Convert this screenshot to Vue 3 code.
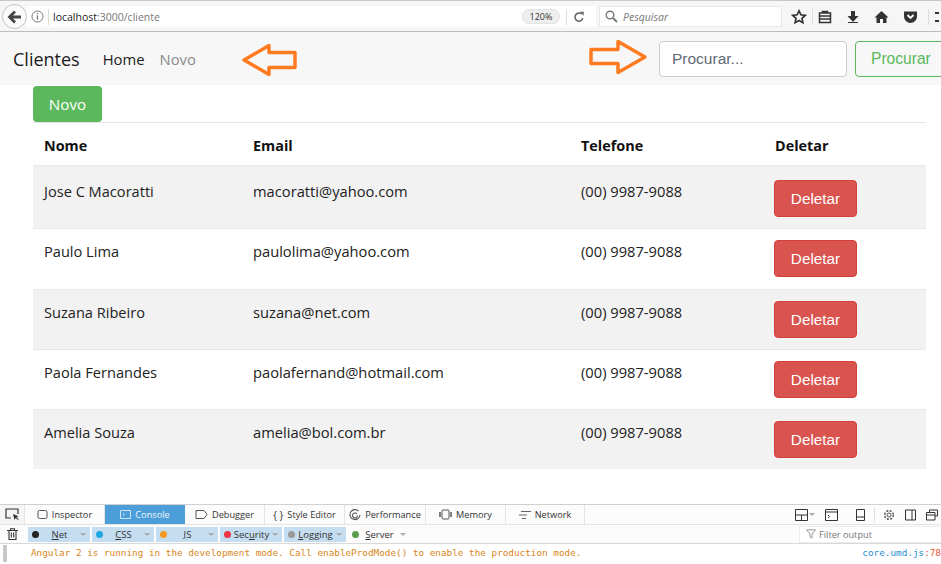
<script setup>
const rows = [
  { nome: 'Jose C Macoratti', email: 'macoratti@yahoo.com' },
  { nome: 'Paulo Lima', email: 'paulolima@yahoo.com' },
  { nome: 'Suzana Ribeiro', email: 'suzana@net.com' },
  { nome: 'Paola Fernandes', email: 'paolafernand@hotmail.com' },
  { nome: 'Amelia Souza', email: 'amelia@bol.com.br' },
]
const filters = [
  { pre: '', key: 'N', post: 'et', c: '#222' },
  { pre: '', key: 'C', post: 'SS', c: '#1fa8e0' },
  { pre: '', key: 'J', post: 'S', c: '#f59a23' },
  { pre: 'Sec', key: 'u', post: 'rity', c: '#ee3344' },
  { pre: '', key: 'L', post: 'ogging', c: '#999' },
]
</script>

<template>
  <div class="page">
    <header class="chrome">
      <div class="back">
        <svg width="16" height="16" viewBox="0 0 16 16"><path d="M8 2.500 2.500 8 8 13.500M3 8h11" fill="none" stroke="#444" stroke-width="2.800"/></svg>
      </div>
      <div class="url">
        <svg class="info" width="13" height="13" viewBox="0 0 13 13"><circle cx="6.500" cy="6.500" r="5.500" fill="none" stroke="#777"/><path d="M6.500 5.500v4M6.500 3v1.300" stroke="#777" stroke-width="1.300"/></svg>
        <span class="sep"></span>
        <span class="addr"><b>localhost</b>:3000/cliente</span>
        <span class="zoombadge">120%</span>
        <span class="sep sep2"></span>
        <svg class="reload" width="12" height="12" viewBox="0 0 14 14"><path d="M11.500 8.500A4.700 4.700 0 1 1 10 3.500" fill="none" stroke="#666" stroke-width="1.800"/><path d="M8 1h4.500v4.500z" fill="#666"/></svg>
      </div>
      <div class="search">
        <svg width="13" height="13" viewBox="0 0 13 13"><circle cx="5" cy="5" r="3.800" fill="none" stroke="#777" stroke-width="1.400"/><path d="m8 8 4 4" stroke="#777" stroke-width="1.800"/></svg>
        <i>Pesquisar</i>
      </div>
      <div class="tools">
        <svg width="16" height="16" viewBox="0 0 16 16"><path d="m8 1.800 1.900 4 4.400.5-3.300 3 .9 4.400L8 11.500l-3.900 2.200.9-4.400-3.300-3 4.400-.5z" fill="none" stroke="#333" stroke-width="1.700"/></svg>
        <span class="tool-sep"></span>
        <svg width="14" height="14" viewBox="0 0 14 14"><path d="M1.500 3h11v9.500h-11zM4.500 3V1.500h5V3M1.500 6h11M1.500 9h11" fill="none" stroke="#333" stroke-width="1.500"/></svg>
        <svg width="14" height="14" viewBox="0 0 14 14"><path d="M5 1h4v5h3.500L7 12 1.500 6H5z" fill="#333"/><path d="M2 12.500h10" stroke="#333"/></svg>
        <svg width="15" height="14" viewBox="0 0 15 14"><path d="M7.500 1 .5 7.500h2V13h3.500V9h3v4h3.500V7.500h2z" fill="#333"/></svg>
        <svg width="15" height="14" viewBox="0 0 15 14"><path d="M1 1.500h13v5a6.500 6.500 0 0 1-13 0z" fill="#333"/><path d="m4.500 5 3 3 3-3" fill="none" stroke="#fff" stroke-width="1.800"/></svg>
        <span class="tool-sep tool-sep2"></span>
        <span class="burger"></span>
      </div>
    </header>

    <nav class="navbar">
      <span class="brand">Clientes</span>
      <a class="nav-link active">Home</a>
      <a class="nav-link">Novo</a>
      <span class="grow"></span>
      <div class="search-input">Procurar...</div>
      <div class="btn-outline">Procurar</div>
      <svg class="arrow arrow-left" width="56" height="34" viewBox="0 0 56 34"><path d="M2 17 27 2.500v7h26v15H27v7z" fill="none" stroke="#ff7b22" stroke-width="3.500" stroke-linejoin="round"/></svg>
      <svg class="arrow arrow-right" width="60" height="36" viewBox="0 0 60 36"><path d="M57 18 30 2.500v8H3v14h27v9z" fill="none" stroke="#ff7b22" stroke-width="3.500" stroke-linejoin="round"/></svg>
    </nav>

    <main class="content">
      <div class="btn-novo">Novo</div>
      <div class="table">
        <div class="row head">
          <div class="c1">Nome</div>
          <div class="c2">Email</div>
          <div class="c3">Telefone</div>
          <div class="c4">Deletar</div>
        </div>
        <div v-for="(r, i) in rows" :key="r.nome" class="row body" :class="{ odd: i % 2 === 0, first: i === 0, second: i === 1 }">
          <div class="c1">{{ r.nome }}</div>
          <div class="c2">{{ r.email }}</div>
          <div class="c3">(00) 9987-9088</div>
          <div class="c4"><span class="btn-del">Deletar</span></div>
        </div>
      </div>
    </main>

    <section class="devtools">
      <div class="tabs">
        <div class="pick">
          <svg width="14" height="13" viewBox="0 0 14 13"><path d="M6 10H1V1h12v5" fill="none" stroke="#333" stroke-width="1.200"/><path d="m8 6 1.500 6 1.200-2 2.300 2 .7-.8-2.200-2 2-1z" fill="#333"/></svg>
        </div>
        <div class="tab t-ins"><svg width="11" height="11" viewBox="0 0 11 11"><rect x="1" y="1.500" width="9" height="8" rx="1.500" fill="none" stroke="#555"/></svg>Inspector</div>
        <div class="tab t-con on"><svg width="11" height="11" viewBox="0 0 11 11"><path d="M.5 1.500h10v8H.5zM3 4l1.500 1.500L3 7" fill="none" stroke="#cfe4f5"/></svg>Console</div>
        <div class="tab t-deb"><svg width="13" height="11" viewBox="0 0 13 11"><path d="M1 1.500h8l3 4-3 4H1z" fill="none" stroke="#555"/></svg>Debugger</div>
        <div class="tab t-sty"><span class="braces">{ }</span>Style Editor</div>
        <div class="tab t-per"><svg width="12" height="12" viewBox="0 0 12 12"><path d="M9.500 2A5 5 0 1 0 11 6M8 5a2.500 2.500 0 1 0 .5 1.500" fill="none" stroke="#555" stroke-width="1.100"/></svg>Performance</div>
        <div class="tab t-mem"><svg width="13" height="11" viewBox="0 0 13 11"><rect x="3" y="1" width="7" height="9" rx="1" fill="none" stroke="#555"/><path d="M1 3v5M12 3v5" stroke="#555" stroke-width="1.500"/></svg>Memory</div>
        <div class="tab t-net"><svg width="12" height="10" viewBox="0 0 12 10"><path d="M2 1.500h10M0 5h8M3 8.500h4" stroke="#666"/></svg>Network</div>
        <span class="grow"></span>
        <div class="dt-icons">
          <svg width="13" height="12" viewBox="0 0 13 12"><path d="M.5.500h12v11H.5zM.5 6h12M6.500 6v5.500" fill="none" stroke="#333"/></svg>
          <span class="mini-caret"></span>
          <svg class="ml10" width="13" height="12" viewBox="0 0 13 12"><path d="M.5.500h12v11H.5zM.5 3h12M3 6l1.500 1.500L3 9" fill="none" stroke="#333"/></svg>
          <svg class="ml18" width="9" height="12" viewBox="0 0 9 12"><path d="M.5.500h8v11h-8zM.5 8h8" fill="none" stroke="#333"/></svg>
          <span class="dt-sep"></span>
          <svg width="12" height="12" viewBox="0 0 12 12"><circle cx="6" cy="6" r="2" fill="none" stroke="#555"/><circle cx="6" cy="6" r="4.300" fill="none" stroke="#555" stroke-width="1.500" stroke-dasharray="2 1.400"/></svg>
          <svg class="ml10" width="11" height="12" viewBox="0 0 11 12"><path d="M.5 1h10v10H.5zM7 1v10" fill="none" stroke="#333"/></svg>
          <svg class="ml10" width="12" height="12" viewBox="0 0 12 12"><path d="M3.500 3V1h8v6H9M.5 3.500h8.500v7.500H.5zM.5 6h8.500" fill="none" stroke="#333"/></svg>
        </div>
      </div>
      <div class="filters">
        <svg class="trash" width="11" height="12" viewBox="0 0 11 12"><path d="M0 2.500h11M3.500 2.500V.8h4v1.700M2 2.500v9h7v-9M4.300 4.500v5M6.700 4.500v5" fill="none" stroke="#333" stroke-width="1.100"/></svg>
        <div v-for="f in filters" :key="f.post" class="chip">
          <span class="dot" :style="{ background: f.c }"></span>
          <span class="chip-label">{{ f.pre }}<u>{{ f.key }}</u>{{ f.post }}</span>
          <span class="caret"></span>
        </div>
        <div class="chip plain">
          <span class="dot" style="background:#5a9e4b"></span>
          <span class="chip-label"><u>S</u>erver</span>
          <span class="caret"></span>
        </div>
        <span class="grow"></span>
        <div class="filter-box">
          <svg width="10" height="10" viewBox="0 0 10 10"><path d="M.5.800h9L6 5v4L4 8V5z" fill="none" stroke="#999"/></svg>
          Filter output
        </div>
      </div>
      <div class="log">
        <span class="gutter"></span>
        <span class="msg">Angular 2 is running in the development mode. Call enableProdMode() to enable the production mode.</span>
        <span class="grow"></span>
        <span class="src">core.umd.js<em>:78</em></span>
      </div>
    </section>
  </div>
</template>

<style>
html, body { margin: 0; background: #fff; overflow: hidden; }
</style>

<style scoped>
.page {
  position: relative;
  width: 941px;
  height: 564px;
  display: flex;
  flex-direction: column;
  overflow: hidden;
  font-family: "Open Sans", "Noto Sans", sans-serif;
  color: #111;
}
.grow { flex: 1; }

/* browser chrome */
.chrome {
  height: 32px;
  box-sizing: border-box;
  background: #f6f6f6;
  border-top: 1px solid #c8c8c8;
  border-bottom: 1px solid #bdbdbd;
  display: flex;
  align-items: center;
  padding-top: 1px;
  flex: none;
}
.back {
  width: 25px;
  height: 25px;
  box-sizing: border-box;
  margin-left: 2px;
  border: 1px solid #c4c4c4;
  border-radius: 50%;
  background: #fbfbfb;
  display: flex;
  align-items: center;
  justify-content: center;
  flex: none;
  position: relative;
  z-index: 1;
}
.url {
  width: 570px;
  height: 21px;
  margin-left: -1px;
  background: #fff;
  display: flex;
  align-items: center;
  box-sizing: border-box;
  padding-left: 5px;
  flex: none;
}
.sep { width: 1px; height: 16px; background: #ddd; margin-left: 4px; }
.addr { margin-left: 4px; font-size: 10.500px; color: #777; flex: 1; }
.addr b { font-weight: 400; color: #222; }
.zoombadge {
  width: 36px;
  height: 13px;
  line-height: 13px;
  font-size: 9px;
  text-align: center;
  color: #333;
  background: #eee;
  border-radius: 7px;
  border: 1px solid #e4e4e4;
}
.sep2 { margin-left: 6px; }
.reload { margin: 0 11px 0 6px; }
.search {
  width: 183px;
  height: 21px;
  margin-left: 3px;
  box-sizing: border-box;
  background: #fff;
  border: 1px solid #e8e8e8;
  display: flex;
  align-items: center;
  gap: 5px;
  padding-left: 5px;
  font-size: 10.500px;
  color: #777;
  flex: none;
}
.tools {
  display: flex;
  align-items: center;
  gap: 14px;
  margin-left: 9px;
  flex: none;
}
.tool-sep { width: 1px; height: 16px; background: #ddd; margin: 0 -9px; }
.tool-sep2 { margin: 0 -7px 0 -4px; }
.burger {
  width: 4px;
  height: 10px;
  border-top: 2px solid #333;
  border-bottom: 2px solid #333;
  box-sizing: border-box;
  margin-left: -1px;
}

/* navbar */
.navbar {
  position: relative;
  height: 53px;
  background: #f7f7f7;
  display: flex;
  align-items: center;
  padding-left: 13px;
  flex: none;
}
.brand { font-size: 18px; margin-right: 23px; color: #1a1a1a; }
.nav-link { font-size: 14.800px; color: #8a8a8a; margin-right: 15px; }
.nav-link.active { color: #222; }
.search-input {
  width: 188px;
  height: 36px;
  box-sizing: border-box;
  margin-right: 8px;
  background: #fff;
  border: 1px solid #ccc;
  border-radius: 4px;
  padding-left: 12px;
  line-height: 34px;
  font-family: "Liberation Sans", sans-serif;
  font-size: 15.500px;
  color: #5f6a75;
  flex: none;
}
.btn-outline {
  width: 100px;
  height: 36px;
  margin-right: -14px;
  box-sizing: border-box;
  background: transparent;
  border: 1px solid #5cb85c;
  border-radius: 4px;
  padding-left: 15px;
  line-height: 34px;
  font-family: "Liberation Sans", sans-serif;
  font-size: 15.600px;
  color: #5cb85c;
  flex: none;
}
.arrow { position: absolute; }
.arrow-left { left: 242px; top: 11px; }
.arrow-right { left: 588px; top: 7px; }

/* content */
.content {
  margin-left: 33px;
  width: 893px;
  flex: none;
}
.btn-novo {
  width: 69px;
  height: 36px;
  margin-top: 1px;
  line-height: 36px;
  text-align: center;
  background: #5cb85c;
  color: #fff;
  border-radius: 4px;
  font-size: 15.200px;
}
.table { border-top: 1px solid #e4e4e4; }
.row { display: flex; font-size: 14.700px; color: #222; box-sizing: border-box; }
.c1 { width: 220px; padding-left: 11px; box-sizing: border-box; font-size: 14.600px; }
.c2 { width: 328px; }
.c3 { width: 194px; }
.c4 { width: 151px; }
.head {
  height: 44px;
  padding-top: 2px;
  align-items: center;
  font-weight: 700;
  font-size: 14.400px;
  color: #111;
  border-bottom: 2px solid #ececec;
}
.head .c1 { font-size: 14.400px; }
.body {
  height: 60px;
  padding-top: 12px;
  border-top: 1px solid #e8e8e8;
}
.body.first { height: 61px; padding-top: 14px; border-top: 0; }
.body.second { height: 61px; }
.odd { background: #f2f2f2; }
.btn-del {
  display: block;
  width: 83px;
  height: 37px;
  margin-top: -1px;
  margin-left: -1px;
  line-height: 35px;
  text-align: center;
  background: #d9534f;
  border: 1px solid #d43f3a;
  box-sizing: border-box;
  border-radius: 4px;
  color: #fff;
  font-family: "Liberation Sans", sans-serif;
  font-size: 15.300px;
}

/* devtools */
.devtools {
  margin-top: auto;
  height: 60px;
  flex: none;
  font-size: 9.200px;
  color: #333;
  background: #fff;
}
.tabs {
  height: 21px;
  box-sizing: border-box;
  border-top: 1px solid #d0d0d0;
  border-bottom: 1px solid #e4e4e4;
  background: #fcfcfc;
  display: flex;
  align-items: stretch;
}
.pick { width: 24px; display: flex; align-items: center; justify-content: center; background: #f5f5f5; border-right: 1px solid #e4e4e4; }
.tab {
  display: flex;
  align-items: center;
  justify-content: center;
  gap: 4px;
  box-sizing: border-box;
  border-right: 1px solid #e4e4e4;
}
.t-ins { width: 80px; }
.t-con { width: 80px; }
.t-deb { width: 80px; }
.t-sty { width: 80px; }
.t-per { width: 81px; }
.t-mem { width: 80px; }
.t-net { width: 79px; }
.on { background: #4c9ed9; color: #f0f7fc; border-right: 0; }
.braces { font-size: 10px; }
.dt-icons { display: flex; align-items: center; padding-right: 3px; }
.mini-caret, .caret {
  width: 0;
  height: 0;
  border-left: 3px solid transparent;
  border-right: 3px solid transparent;
  border-top: 3px solid #aaa;
}
.mini-caret { margin-left: 1px; }
.ml10 { margin-left: 10px; }
.ml18 { margin-left: 18px; }
.dt-sep { width: 1px; height: 14px; background: #ddd; margin: 0 8px 0 9px; }
.filters {
  height: 19px;
  box-sizing: border-box;
  border-bottom: 1px solid #d8d8d8;
  display: flex;
  align-items: center;
  background: #fcfcfc;
}
.trash { margin: 0 10px 0 7px; flex: none; }
.chip {
  width: 62px;
  height: 15px;
  margin-right: 2px;
  background: #c5ddf0;
  display: flex;
  align-items: center;
  box-sizing: border-box;
  padding: 0 4px;
  flex: none;
}
.chip.plain { background: transparent; }
.dot { width: 7px; height: 7px; border-radius: 50%; flex: none; }
.chip-label { flex: 1; text-align: center; white-space: nowrap; font-size: 9.500px; }
.filter-box {
  width: 142px;
  height: 17px;
  box-sizing: border-box;
  border: 1px solid #eee;
  border-right: 0;
  background: #fff;
  display: flex;
  align-items: center;
  gap: 3px;
  padding-left: 6px;
  color: #777;
}
.log {
  height: 20px;
  padding-bottom: 4px;
  box-sizing: border-box;
  display: flex;
  align-items: center;
  font-family: "DejaVu Sans Mono", "Liberation Mono", monospace;
  font-size: 9.330px;
}
.gutter { width: 4px; height: 17px; margin: 3px 0 0 3px; background: #c8c8c8; }
.msg { margin-left: 24px; color: #d9861a; white-space: nowrap; }
.src { color: #1f8fce; white-space: nowrap; }
.src em { font-style: normal; color: #e8593a; }
</style>
